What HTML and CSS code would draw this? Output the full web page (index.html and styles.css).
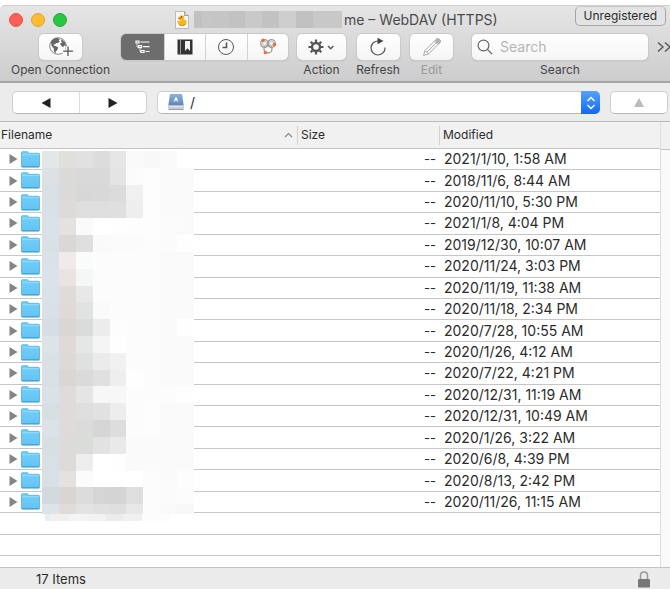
FILE: index.html
```html
<!DOCTYPE html>
<html lang="en">
<head>
<meta charset="utf-8">
<title>WebDAV (HTTPS)</title>
<link rel="stylesheet" href="styles.css">
</head>
<body>
<svg class="defs" aria-hidden="true">
  <linearGradient id="folderFill" x1="0" y1="0" x2="0" y2="1"><stop offset="0" stop-color="#73cff8"/><stop offset="1" stop-color="#63c3f4"/></linearGradient>
  <linearGradient id="driveFill" x1="0" y1="0" x2="0" y2="1"><stop offset="0" stop-color="#8fb0dc"/><stop offset="1" stop-color="#5f86bd"/></linearGradient>
  <symbol id="folder" viewBox="0 0 19 17"><path d="M.5 3V1.6Q.5.7 1.400.7H6.200Q7 .7 7.300 1.500L7.600 2.300H17.500Q18.500 2.300 18.500 3.300V15.200Q18.500 16 17.700 16H1.300Q.5 16 .5 15.200Z" fill="url(#folderFill)" stroke="#4db0dc" stroke-width=".8"/><path d="M1 3.600H18" stroke="#92dcfb"/><path d="M.8 15.800H18.200" stroke="#3f9fcb"/></symbol>
</svg>
<div class="window">
  <header class="chrome">
    <div class="titlebar">
      <div class="lights"><button class="light close" aria-label="Close"></button><button class="light minimize" aria-label="Minimize"></button><button class="light maximize" aria-label="Zoom"></button></div>
      <h1 class="title">
        <svg width="14" height="18" viewBox="0 0 14 18" aria-hidden="true"><path d="M.5.5H9.500L13.500 4.500V17.500H.5Z" fill="#f7f6f2" stroke="#bbb"/><path d="M9.500.5V4.500H13.500" fill="#ddd" stroke="#888" stroke-width=".8"/><path d="M5 4.800C7 3.300 9.600 4.600 9.300 7L8.800 8.800 11.400 9.200C12.300 12 10.800 14.500 7.500 14.800 4.500 15 2.200 13 2.500 9.800L5.500 10 5.300 8.500 3.200 7.800Z" fill="#f6b81c"/><path d="M3 6.800L5.500 6.500 5.800 8.200 3.600 8.300Z" fill="#df621a"/><circle cx="6.500" cy="6" r=".7" fill="#333"/><path d="M4 13.500Q7 15.800 10.500 13.300" fill="none" stroke="#d58a10"/></svg>
        <svg class="title-mask" id="titleMask" width="148" height="17" viewBox="0 0 148 17" preserveAspectRatio="none" aria-hidden="true"></svg>
        <span>me – WebDAV (HTTPS)</span>
      </h1>
      <button class="badge">Unregistered</button>
    </div>
    <div class="toolbar">
      <div class="tool connection">
        <button class="tool-button" id="open"><svg width="26" height="22" viewBox="0 0 26 22"><circle cx="10" cy="10" r="8.300" fill="#fff" stroke="#888"/><path d="M3 6C4 3 7 1.800 9.500 2L12 3.200 10.600 4.500 12 5.500 9.500 7.300 8 7 7.200 8.400 5.600 8.200 6 9.800 8 10.200 10.300 11.500 9.300 14 7.800 15.500 7.600 17.500 6 15.500 5.800 12.500 3.500 9.800Z" fill="#666"/><path d="M13.500 3L17 6.500 18.200 10 16.200 9.500 15.200 11.200 13 9.500 12 7.600 14.300 6.500 13 5.200Z" fill="#666"/><path d="M20 10.500V20M14.500 15.200H25" stroke="#fafafa" stroke-width="4"/><path d="M20 10.500V20M15.200 15.200H25" stroke="#555" stroke-width="1.300"/></svg></button>
        <label for="open">Open Connection</label>
      </div>
      <div class="segments" role="group" aria-label="Views">
        <button aria-label="Browser" aria-pressed="true"><svg width="16" height="14" viewBox="0 0 16 14" fill="none" stroke="#fff" stroke-width="1.200"><path d="M1 1H4V3H1ZM3.500 5.700H6.500V7.700H3.500ZM6 10.500H9V12.500H6ZM5.500 2H14.500M8 6.700H14.500M10.500 11.500H14.500"/><path d="M2 3.500V7H3.500M5 8.200V11.500H6" stroke-width=".7"/></svg></button>
        <button aria-label="Bookmarks"><svg width="16" height="16" viewBox="0 0 16 16"><path d="M.5 .5H15.500V15.500H.5Z" fill="#333"/><path d="M3.500 0V16" stroke="#999"/><path d="M8 2H13V12L10.500 9.300 8 12Z" fill="#f5f5f5"/></svg></button>
        <button aria-label="History"><svg width="18" height="18" viewBox="0 0 18 18" fill="none" stroke="#555"><circle cx="9" cy="9" r="7.500"/><path d="M9.500 4.500V9.500H5.500" stroke-width="1.600"/></svg></button>
        <button aria-label="Bonjour"><svg width="18" height="18" viewBox="0 0 18 18" fill="none" stroke="#999" stroke-width="1.300"><circle cx="5.500" cy="5.500" r="3.800"/><circle cx="12.500" cy="5.500" r="3.800"/><circle cx="9" cy="11" r="4"/><circle cx="5.500" cy="5.500" r="2" stroke="#ccc"/><circle cx="12.500" cy="5.500" r="2" stroke="#ccc"/><g fill="#f26a30" stroke="none"><circle cx="4" cy="2.300" r="1.700"/><circle cx="15.500" cy="6.500" r="1.700"/><circle cx="6.300" cy="14.500" r="1.700"/></g></svg></button>
      </div>
      <div class="tool action">
        <button class="tool-button" id="action"><svg width="27" height="16" viewBox="0 0 27 16" fill="none" stroke="#555"><circle cx="8" cy="8" r="4" stroke-width="2.400"/><path d="M8 .5V3M8 13V15.500M.5 8H3M13 8H15.500M2.700 2.700L4.500 4.500M11.500 11.500L13.300 13.300M2.700 13.300L4.500 11.500M11.500 4.500L13.300 2.700" stroke-width="2.200"/><path d="M20 7L22.700 9.700 25.400 7" stroke-width="1.500"/></svg></button>
        <label for="action">Action</label>
      </div>
      <div class="tool refresh">
        <button class="tool-button" id="refresh"><svg width="18" height="20" viewBox="0 0 18 20"><path d="M9.500 4A7 7 0 1 0 16 10.500" fill="none" stroke="#555" stroke-width="1.200"/><path d="M8.500.8L14.500 4 8.500 7.300Z" fill="#444"/></svg></button>
        <label for="refresh">Refresh</label>
      </div>
      <div class="tool edit">
        <button class="tool-button" id="edit" disabled><svg width="20" height="20" viewBox="0 0 20 20" fill="none" stroke="#aaa"><path d="M1.500 18.500L3 13.500 14 2.500Q15.500 1 17.500 2.500T17.500 6L6.500 17Z"/><path d="M3 13.500L6.500 17M5 15L15 5M12.500 4L16 7.500"/><path d="M14 2.500Q15.500 1 17.500 2.500T17.500 6L16.500 6.500 13.500 3.500Z" fill="#b5b5b5"/></svg></button>
        <label for="edit">Edit</label>
      </div>
      <div class="tool search">
        <div class="search-box"><svg width="16" height="16" viewBox="0 0 16 16" fill="none" stroke="#666" stroke-width="1.200"><circle cx="6.500" cy="6.500" r="5.400"/><path d="M10.400 10.400L15 15"/></svg><input id="search" type="text" placeholder="Search"></div>
        <label for="search">Search</label>
      </div>
      <button class="more" aria-label="More"><svg width="14" height="12" viewBox="0 0 14 12" fill="none" stroke="#555" stroke-width="1.400"><path d="M1 1.500L6 6 1 10.500M8 1.500L13 6 8 10.500"/></svg></button>
    </div>
  </header>

  <nav class="pathbar">
    <div class="history">
      <button aria-label="Back"><svg width="10" height="10" viewBox="0 0 10 10"><path d="M9.500 0V10L.5 5Z" fill="#222"/></svg></button>
      <button aria-label="Forward"><svg width="10" height="10" viewBox="0 0 10 10"><path d="M.5 0V10L9.500 5Z" fill="#222"/></svg></button>
    </div>
    <div class="path">
      <svg class="drive" width="16" height="16" viewBox="0 0 16 16" aria-hidden="true"><path d="M2 .5H14L16 12V15Q16 16 15 16H1Q0 16 0 15V12Z" fill="#c9ced6"/><path d="M2 0H14L15.500 11.500H.5Z" fill="url(#driveFill)"/><path d="M8 2.500L10.500 7.500H9.200V6.500H6.800V7.500H5.500Z" fill="#fff"/><path d="M.5 12.200H15.500" stroke="#eee"/><path d="M1 15.500H15" stroke="#929baa"/></svg>
      <select aria-label="Path"><option>/</option></select>
      <span class="stepper"><svg width="10" height="14" viewBox="0 0 10 14" fill="none" stroke="#fff" stroke-width="1.500"><path d="M1.500 5L5 1.500 8.500 5M1.500 9L5 12.500 8.500 9"/></svg></span>
    </div>
    <button class="up" aria-label="Parent folder" disabled><svg width="10" height="9" viewBox="0 0 10 9"><path d="M5 0L10 9H0Z" fill="#bbb"/></svg></button>
  </nav>

  <main class="listing">
    <table>
      <thead><tr>
        <th>Filename<svg width="9" height="6" viewBox="0 0 9 6" fill="none" stroke="#888" stroke-width="1.200"><path d="M1 5L4.500 1.500 8 5"/></svg></th>
        <th>Size</th><th>Modified</th>
      </tr></thead>
      <tbody id="rows"></tbody>
    </table>
    <svg class="name-mask" id="nameMask" width="152" height="370" viewBox="0 0 90 220" preserveAspectRatio="none" aria-hidden="true"></svg>
  </main>

  <footer class="status"><span>17 Items</span>
    <svg width="12" height="17" viewBox="0 0 12 17"><path d="M2.500 9V4.500Q2.500 1 6 1T9.500 4.500V9" fill="none" stroke="#999" stroke-width="1.500"/><rect y="8" width="12" height="8.500" rx="1" fill="#777"/></svg>
  </footer>
</div>
<script src="listing.js"></script>
</body>
</html>
```
FILE: styles.css
```css
* { box-sizing: border-box; }
body { margin: 0; font: 13px/16px Inter, "Liberation Sans", sans-serif; color: #2b2b2b; background: #fff; }
button, input, select { font: inherit; color: inherit; margin: 0; padding: 0; border: 0; background: none; }
button { display: flex; align-items: center; justify-content: center; }
svg { flex: none; display: block; }
.defs { position: absolute; width: 0; height: 0; }
.window { display: flex; flex-direction: column; min-height: 100vh; padding-top: 5px; overflow: hidden; }

.chrome { background: linear-gradient(#e5e5e5, #cdcdcd); border-top: 1px solid #d0d0d0; border-bottom: 2px solid #a6a6a6; border-radius: 5px 0 0 0; }
.titlebar { display: grid; grid-template-columns: 175px 1fr auto; align-items: center; height: 27px; padding-right: 4px; }
.lights { display: flex; gap: 8px; padding-left: 9px; }
.light { width: 14px; height: 14px; border: 1px solid; border-radius: 50%; }
.close { background: #fe5f57; border-color: #e6534b; }
.minimize { background: #febc2e; border-color: #e0a32b; }
.maximize { background: #28c740; border-color: #20a934; }
.title { display: flex; align-items: center; margin: 0; font-size: 14px; font-weight: 400; color: #4a4a4a; white-space: nowrap; }
.title-mask { margin: 0 2px 0 5px; }
.badge { align-self: start; height: 20px; padding: 0 8px; border: 1px solid #a5a5a5; border-radius: 5px; border-top-color: #c8c8c8; font-size: 12px; background: #e3e3e3; }

.toolbar { display: flex; gap: 9px; padding: 1px 0 3px 9px; color: #444; }
.tool { display: flex; flex: none; flex-direction: column; align-items: center; gap: 2px; font-size: 12px; white-space: nowrap; }
.tool-button, .search-box, .segments { height: 26px; border-radius: 5px; background: linear-gradient(#fff, #f5f5f5); box-shadow: 0 0 0 1px #c9c9c9, 0 1px 1px #999; }
.tool-button { width: 43px; }
.connection { width: 103px; }
.action { width: 49px; }
.action .tool-button { width: 49px; }
.refresh { width: 46px; }
.edit { width: 43px; }
.edit label { color: #999; }
.segments { display: flex; flex: none; width: 167px; overflow: hidden; }
.segments button { flex: 1; border-left: 1px solid #d2d2d2; }
.segments button:first-child { flex: 0 0 43px; border: 0; background: #6d6d6d; }
.toolbar .search { flex: 1; min-width: 0; margin-left: 10px; }
.search-box { display: flex; align-items: center; gap: 7px; width: 100%; padding: 0 5px; }
.search-box input { flex: 1; min-width: 0; font-size: 14px; outline: 0; }
.search-box input::placeholder { color: #b5b5b5; opacity: 1; }
.more { flex: none; width: 13px; height: 26px; overflow: hidden; justify-content: flex-start; }

.pathbar { display: flex; gap: 10px; padding: 8px 2px 7px 12px; background: #ececec; border-bottom: 1px solid #b9b9b9; }
.history, .path, .up { height: 23px; border-radius: 5px; border: 1px solid #cfcfcf; border-bottom-color: #b5b5b5; background: #fff; }
.history { display: flex; width: 135px; }
.history button { flex: 1; }
.history button + button { border-left: 1px solid #ddd; }
.path { position: relative; flex: 1; }
.path select { appearance: none; width: 100%; height: 100%; padding-left: 32px; font-size: 14px; border-radius: 5px; }
.drive { position: absolute; left: 10px; top: 2px; }
.stepper { position: absolute; top: -1px; right: -1px; bottom: -1px; width: 19px; display: flex; align-items: center; justify-content: center; border-radius: 0 5px 5px 0; background: linear-gradient(#55a3fc, #1069fb); pointer-events: none; }
.up { width: 58px; }

.listing { position: relative; flex: 1; display: flex; flex-direction: column; padding-right: 9px; background: #fafafa; }
.listing::before { content: ""; position: absolute; top: 0; right: 0; width: 9px; height: 27px; background: #f1f1f1; border-bottom: 1px solid #c4c4c4; }
table { display: flex; flex-direction: column; flex: 1; padding-bottom: 11px; background: #fff; border-right: 1px solid #ddd; }
tbody { flex: 1; display: flex; flex-direction: column; }
tr { display: grid; grid-template-columns: 1fr 142px 220px; align-items: center; }
thead tr { height: 27px; background: #f1f1f1; border-bottom: 1px solid #c4c4c4; }
tbody tr { flex: 1; min-height: 21px; border-bottom: 1px solid #c6c6c6; }
th { display: flex; align-items: center; justify-content: space-between; height: 19px; padding: 0 4px 0 3px; border-right: 1px solid #d2d2d2; font-size: 12px; font-weight: 400; }
th:first-child { padding-left: 1px; }
th:last-child { border: 0; }
td { padding: 0; white-space: nowrap; }
.name { display: flex; align-items: center; gap: 3px; padding-left: 9px; }
.disclosure { width: 9px; height: 10px; }
.size { padding-right: 4px; text-align: right; }
.modified { padding-left: 4px; font-size: 14px; }
.name-mask { position: absolute; left: 42px; top: 29px; }

.status { display: flex; align-items: center; justify-content: space-between; height: 22px; padding: 1px 20px 0 36px; background: #ebebeb; border-top: 1px solid #c4c4c4; }
```
FILE: listing.js
```js
const dates = [
  "2021/1/10, 1:58 AM", "2018/11/6, 8:44 AM", "2020/11/10, 5:30 PM", "2021/1/8, 4:04 PM",
  "2019/12/30, 10:07 AM", "2020/11/24, 3:03 PM", "2020/11/19, 11:38 AM", "2020/11/18, 2:34 PM",
  "2020/7/28, 10:55 AM", "2020/1/26, 4:12 AM", "2020/7/22, 4:21 PM", "2020/12/31, 11:19 AM",
  "2020/12/31, 10:49 AM", "2020/1/26, 3:22 AM", "2020/6/8, 4:39 PM", "2020/8/13, 2:42 PM",
  "2020/11/26, 11:15 AM"
];
const row = date => `<tr><td class="name"><button class="disclosure" aria-label="Expand"><svg width="9" height="10" viewBox="0 0 9 10"><path d="M.5 0V10L8.500 5Z" fill="#858585"/></svg></button><svg width="19" height="17"><use href="#folder"/></svg></td><td class="size">--</td><td class="modified">${date}</td></tr>`;
const blank = "<tr><td></td><td></td><td></td></tr>";
document.getElementById("rows").innerHTML = dates.map(row).join("") + blank + blank;

const rect = (x, y, w, h, fill) => `<rect x="${x}" y="${y}" width="${w}" height="${h}" fill="#${fill}" shape-rendering="crispEdges"/>`;

// Redacted name blocks, nine cells to a line; short lines repeat their last colour.
const blocks = `
e2e8e8 e1dfdb e0e1e0 dcdcdc e6e6e6 fafafa f8f8f8 fafafa ffffff
dbe1e5 dcdad8 d8d9d8 d9d9d9 e4e4e4 fbfbfb fdfdfd fafafa
d9e0e5 dcdad8 d6d8d7 d8d8d8 dbdbdb f0f0f0 fdfdfd fafafa
dae1e6 dcdbda dedede dedede dfdfdf eeeeee fdfdfd fafafa
dbe2e7 e4e2df f9fbfa ffffff fefefe fdfdfd fdfdfd fbfbfb fafafa
d9e1e6 dad8d6 dfdfdf fafafa fbfbfb fbfbfb fcfcfc fbfbfb fefefe
dbe2e7 f0ebea fafcfb fcfcfc fcfcfc fcfcfc fcfcfc fafafa
dce3e8 e9e4e2 f5f7f6 fcfcfc fcfcfc fcfcfc fcfcfc fafafa
dbe2e7 dfdbd9 e8e8e8 fcfcfc fcfcfc fcfcfc fcfcfc fafafa
dae1e6 dfdad8 e0e3e1 fafafa fcfcfc fcfcfc fcfcfc fafafa
d7dee3 d9d6d4 dadcdb ececec fdfdfd fcfcfc fcfcfc fafafa fefefe
dde4e8 dfdad8 e5e7e6 f5f5f5 fefefe fcfcfc fcfcfc fafafa
dae1e5 dcd9d7 dfe1e0 ebebeb f1f1f1 fcfcfc fcfcfc fafafa
d9e0e4 dad6d4 dadada e0e0e0 eeeeee fefefe fcfcfc fafafa
dbe2e7 dfdbda e5e5e5 f7f7f7 f7f7f7 fcfcfc fcfcfc fcfcfc fefefe
d8dfe3 dfdbda dedede e1e1e1 ededed fcfcfc fdfdfd fafafa
dce3e8 dfdbda dadcda d5d5d5 dddddd fcfcfc fdfdfd fafafa
d8dfe3 dddbd9 dadcda e2e2e2 e9e9e9 fafafa
d9e0e5 dddbd9 eeeeee ffffff fefefe fafafa
d8e0e5 e4e2df fafcfb ffffff ffffff ffffff fcfcfc fafafa fdfdfd
d3dadd d9d5d3 dcdcdc d5d5d5 d4d4d4 dedede fcfcfc fbfbfb fcfcfc
dde3e6 e0dcda e3e3e3 e0e0e0 dedede e7e7e7 fcfcfc f9f9f9 f8f8f8`.trim().split("\n");
let mask = "";
blocks.forEach((line, y) => {
  const cells = line.split(" ");
  for (let x = 0; x < 9; x++) mask += rect(x * 10, y * 10, 10, y === 21 ? 6 : 10, cells[Math.min(x, cells.length - 1)]);
});
["e0eff8", "f2f0ee", "f4f4f4", "f2f2f2", "ebebeb", "f0f0f0", "fcfcfc"].forEach((fill, i) => {
  const edges = [2, 5, 16, 27, 38, 48, 59, 75];
  mask += rect(edges[i], 216, edges[i + 1] - edges[i], 4, fill);
});
document.getElementById("nameMask").innerHTML = mask;

const stops = [0, 8, 19, 35, 51, 68, 85, 102, 119, 136, 148];
document.getElementById("titleMask").innerHTML =
  ["c1c1c1", "c6c6c6", "c5c5c5", "c2c2c2", "c9c9c9", "c2c2c2", "cecece", "c1c1c1", "c8c8c8", "c8c8c8"]
    .map((fill, i) => rect(stops[i], 0, stops[i + 1] - stops[i], 17, fill)).join("");
```
